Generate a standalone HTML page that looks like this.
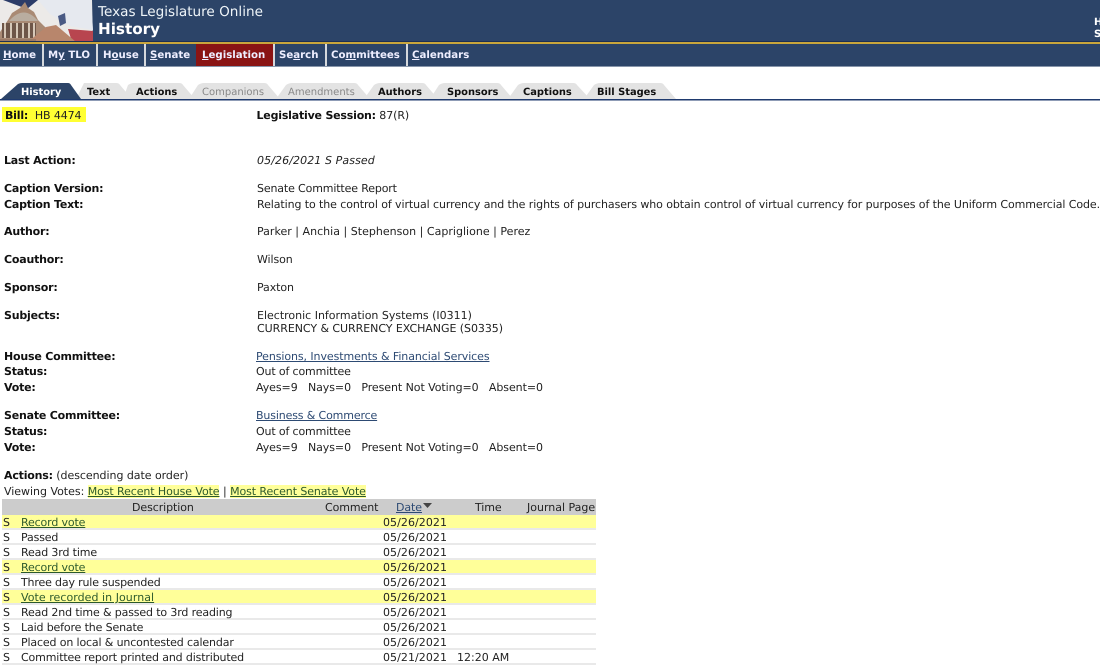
<!DOCTYPE html>
<html><head><meta charset="utf-8"><title>History</title>
<style>
html,body{margin:0;padding:0;width:1100px;height:666px;overflow:hidden;background:#fff}
body{position:relative;font:11px/14px "DejaVu Sans","Liberation Sans",sans-serif;color:#222;text-rendering:geometricPrecision;letter-spacing:-.08px}
.t{position:absolute;white-space:nowrap}
b{color:#111;letter-spacing:-.2px}
a{color:#2d4a73;text-decoration:underline}
.n{position:absolute;top:44px;height:22px;line-height:23px;color:#eef;font-weight:bold;font-size:10.2px;letter-spacing:0;white-space:nowrap}
.s{position:absolute;top:44px;width:2px;height:22px;background:#d5d8dc}
.tb{position:absolute;top:86px;font-weight:bold;font-size:9.9px;letter-spacing:0;color:#111;white-space:nowrap}
.g{color:#888;font-weight:normal;font-size:10px}
.r{position:absolute;left:2px;width:594px;height:13px;border-bottom:2px solid #e9e9e9}
.y{background:#ffff99}
.yl a{color:#2c5a2c}
.d{letter-spacing:.06px}
.q{letter-spacing:-.14px}
</style></head><body>
<div style="position:absolute;left:0;top:0;width:1100px;height:42px;background:#2c4468"></div>
<svg style="position:absolute;left:0;top:0" width="94" height="42" viewBox="0 0 94 42">
<rect width="94" height="42" fill="#2c4468"/>
<path d="M0 0H92L93 42H0Z" fill="#eceae8"/>
<path d="M3 0H38L27 9Z" fill="#2c3c68"/>
<path d="M38 0H91L93 30L70 26L50 14Z" fill="#e6e9ef"/>
<path d="M68 29L93 31V42H72Z" fill="#b8454f"/>
<path d="M58 16L65 13L66 23L60 26Z" fill="#4a5a84"/>
<path d="M0 32L8 20L12 13L20 8L25 2L28 8L34 12L38 20L44 26L62 42H0Z" fill="#a98a74"/>
<path d="M9 21Q24 4 38 21Z" fill="#b9ada0"/>
<path d="M2 23H36V38H2Z" fill="#6e5648"/>
<path d="M5 23V38M11 23V38M17 23V38M23 23V38M29 23V38M34 23V38" stroke="#d6c8b8" stroke-width="2"/>
<path d="M28 42L46 27L56 25L76 42Z" fill="#b8866c"/>
<path d="M0 39H36V42H0Z" fill="#9a7a66"/>
</svg>
<div class="t" style="left:98px;top:3px;font:13.6px/18px 'DejaVu Sans',sans-serif;letter-spacing:0;color:#eef4f8">Texas Legislature Online</div>
<div class="t" style="left:98px;top:19px;font:bold 15.200px/20px 'DejaVu Sans',sans-serif;letter-spacing:0;color:#fff">History</div>
<div class="t" style="left:1094px;top:17px;font:bold 10px/12px 'DejaVu Sans',sans-serif;color:#fff">H<br>S</div>
<div style="position:absolute;left:0;top:41px;width:1100px;height:1px;background:#1c2f55"></div>
<div style="position:absolute;left:0;top:42px;width:1100px;height:2px;background:#c9a63c"></div>
<div style="position:absolute;left:0;top:44px;width:1100px;height:22px;background:#2c4468"></div>
<div style="position:absolute;left:0;top:66px;width:1100px;height:1px;background:#8795aa"></div>
<div style="position:absolute;left:196px;top:44px;width:77px;height:22px;background:#8a1414"></div>
<div class="s" style="left:42px"></div><div class="s" style="left:96px"></div><div class="s" style="left:144px"></div><div class="s" style="left:273px"></div><div class="s" style="left:325px"></div><div class="s" style="left:406px"></div>
<div class="n" style="left:3px"><u>H</u>ome</div>
<div class="n" style="left:48px">M<u>y</u> TLO</div>
<div class="n" style="left:103px">H<u>o</u>use</div>
<div class="n" style="left:150px"><u>S</u>enate</div>
<div class="n" style="left:202px"><u>L</u>egislation</div>
<div class="n" style="left:279px">Se<u>a</u>rch</div>
<div class="n" style="left:331px">Co<u>m</u>mittees</div>
<div class="n" style="left:412px"><u>C</u>alendars</div>

<svg style="position:absolute;left:0;top:80px" width="1100" height="21" viewBox="0 80 1100 21">
<g fill="#e3e3e3">
<path d="M662 99H676L664 85Q663 83 660 83H600Q597 83 594 85L584 99Z"/>
<path d="M578 99H590L577 85Q576 83 573 83H524Q521 83 518 85L508 99Z"/>
<path d="M505 99H513L501 85Q500 83 497 83H445Q442 83 439 85L430 99Z"/>
<path d="M430 99H438L426 85Q425 83 422 83H380Q377 83 374 85L364 99Z"/>
<path d="M358 99H370L358 85Q357 83 354 83H292Q289 83 286 85L276 99Z"/>
<path d="M268 99H280L268 85Q267 83 264 83H204Q201 83 198 85L189 99Z"/>
<path d="M185 99H195L183 85Q182 83 179 83H134Q131 83 128 85L123 99Z"/>
<path d="M118 99H132L120 85Q119 83 116 83H84L76 99Z"/>
</g>
<path d="M1 99L18 84Q20 83 22 83H68Q70 83 71 85L81 99Z" fill="#2c4468"/>
<rect x="0" y="99" width="1100" height="1.500" fill="#1f3a6e"/>
</svg>
<div class="tb" style="left:21px;color:#fff">History</div>
<div class="tb" style="left:87px">Text</div>
<div class="tb" style="left:136px">Actions</div>
<div class="tb g" style="left:202px">Companions</div>
<div class="tb g" style="left:288px">Amendments</div>
<div class="tb" style="left:378px">Authors</div>
<div class="tb" style="left:447px">Sponsors</div>
<div class="tb" style="left:523px">Captions</div>
<div class="tb" style="left:597px">Bill Stages</div>

<div style="position:absolute;left:2px;top:107px;width:84px;height:15px;background:#ffff33"></div>
<div class="t" style="left:5px;top:109px;letter-spacing:-.12px"><b>Bill:</b>&nbsp; HB 4474</div>
<div class="t" style="left:256.500px;top:109px"><b>Legislative Session:</b> 87(R)</div>
<div class="t" style="left:4px;top:154px"><b>Last Action:</b></div>
<div class="t" style="left:257px;top:154px;letter-spacing:.1px"><i>05/26/2021 S Passed</i></div>
<div class="t" style="left:4px;top:182px"><b>Caption Version:</b></div>
<div class="t q" style="left:257px;top:182px">Senate Committee Report</div>
<div class="t" style="left:4px;top:198px"><b>Caption Text:</b></div>
<div class="t" style="left:257px;top:198px;letter-spacing:-.085px">Relating to the control of virtual currency and the rights of purchasers who obtain control of virtual currency for purposes of the Uniform Commercial Code.</div>
<div class="t" style="left:4px;top:225px"><b>Author:</b></div>
<div class="t" style="left:257px;top:225px;letter-spacing:.02px">Parker | Anchia | Stephenson | Capriglione | Perez</div>
<div class="t" style="left:4px;top:253px"><b>Coauthor:</b></div>
<div class="t" style="left:257px;top:253px">Wilson</div>
<div class="t" style="left:4px;top:281px"><b>Sponsor:</b></div>
<div class="t" style="left:257px;top:281px">Paxton</div>
<div class="t" style="left:4px;top:309px"><b>Subjects:</b></div>
<div class="t" style="left:257px;top:309px;letter-spacing:0">Electronic Information Systems (I0311)</div>
<div class="t" style="left:257px;top:322px;letter-spacing:-.05px">CURRENCY &amp; CURRENCY EXCHANGE (S0335)</div>
<div class="t" style="left:4px;top:350px"><b>House Committee:</b></div>
<div class="t" style="left:256px;top:350px"><a>Pensions, Investments &amp; Financial Services</a></div>
<div class="t" style="left:4px;top:365px"><b>Status:</b></div>
<div class="t q" style="left:256px;top:365px">Out of committee</div>
<div class="t" style="left:4px;top:381px"><b>Vote:</b></div>
<div class="t" style="left:256px;top:381px;letter-spacing:-.06px">Ayes=9 &nbsp; Nays=0 &nbsp; Present Not Voting=0 &nbsp; Absent=0</div>
<div class="t" style="left:4px;top:409px"><b>Senate Committee:</b></div>
<div class="t" style="left:256px;top:409px;letter-spacing:-.14px"><a>Business &amp; Commerce</a></div>
<div class="t" style="left:4px;top:425px"><b>Status:</b></div>
<div class="t q" style="left:256px;top:425px">Out of committee</div>
<div class="t" style="left:4px;top:441px"><b>Vote:</b></div>
<div class="t" style="left:256px;top:441px;letter-spacing:-.06px">Ayes=9 &nbsp; Nays=0 &nbsp; Present Not Voting=0 &nbsp; Absent=0</div>
<div class="t" style="left:4px;top:469px;letter-spacing:-.04px"><b>Actions:</b> (descending date order)</div>
<div class="t yl" style="left:4px;top:485px;letter-spacing:-.02px">Viewing Votes: <a style="background:#ffff99;letter-spacing:-.09px">Most Recent House Vote</a> | <a style="background:#ffff99;letter-spacing:-.09px">Most Recent Senate Vote</a></div>

<div style="position:absolute;left:2px;top:499px;width:594px;height:16px;background:#ccc"></div>
<div class="t" style="left:132px;top:501px">Description</div>
<div class="t" style="left:325px;top:501px">Comment</div>
<div class="t" style="left:396px;top:501px"><a>Date</a></div>
<svg style="position:absolute;left:423px;top:503px" width="10" height="6"><path d="M0 0H9L4.500 5Z" fill="#444"/></svg>
<div class="t" style="left:475px;top:501px">Time</div>
<div class="t" style="left:527px;top:501px;letter-spacing:0">Journal Page</div>

<div class="r y" style="top:515px"></div><div class="r" style="top:530px"></div><div class="r" style="top:545px"></div><div class="r y" style="top:560px"></div><div class="r" style="top:575px"></div><div class="r y" style="top:590px"></div><div class="r" style="top:605px"></div><div class="r" style="top:620px"></div><div class="r" style="top:635px"></div><div class="r" style="top:650px"></div>

<div class="t" style="left:3px;top:516px">S</div><div class="t yl q" style="left:21px;top:516px"><a>Record vote</a></div><div class="t d" style="left:383px;top:516px">05/26/2021</div>
<div class="t" style="left:3px;top:531px">S</div><div class="t q" style="left:21px;top:531px">Passed</div><div class="t d" style="left:383px;top:531px">05/26/2021</div>
<div class="t" style="left:3px;top:546px">S</div><div class="t q" style="left:21px;top:546px">Read 3rd time</div><div class="t d" style="left:383px;top:546px">05/26/2021</div>
<div class="t" style="left:3px;top:561px">S</div><div class="t yl q" style="left:21px;top:561px"><a>Record vote</a></div><div class="t d" style="left:383px;top:561px">05/26/2021</div>
<div class="t" style="left:3px;top:576px">S</div><div class="t q" style="left:21px;top:576px;letter-spacing:-.16px">Three day rule suspended</div><div class="t d" style="left:383px;top:576px">05/26/2021</div>
<div class="t" style="left:3px;top:591px">S</div><div class="t yl" style="left:21px;top:591px;letter-spacing:.05px"><a>Vote recorded in Journal</a></div><div class="t d" style="left:383px;top:591px">05/26/2021</div>
<div class="t" style="left:3px;top:606px">S</div><div class="t q" style="left:21px;top:606px">Read 2nd time &amp; passed to 3rd reading</div><div class="t d" style="left:383px;top:606px">05/26/2021</div>
<div class="t" style="left:3px;top:621px">S</div><div class="t q" style="left:21px;top:621px">Laid before the Senate</div><div class="t d" style="left:383px;top:621px">05/26/2021</div>
<div class="t" style="left:3px;top:636px">S</div><div class="t q" style="left:21px;top:636px">Placed on local &amp; uncontested calendar</div><div class="t d" style="left:383px;top:636px">05/26/2021</div>
<div class="t" style="left:3px;top:651px">S</div><div class="t q" style="left:21px;top:651px">Committee report printed and distributed</div><div class="t d" style="left:383px;top:651px">05/21/2021</div><div class="t" style="left:457px;top:651px;letter-spacing:0">12:20 AM</div>
</body></html>
